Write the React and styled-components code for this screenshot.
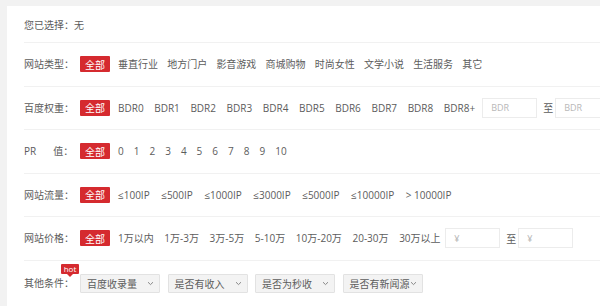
import React from "react";
import styled, { createGlobalStyle } from "styled-components";

const Global = createGlobalStyle`
  html, body { margin: 0; padding: 0; }
  body {
    background: #f2f2f2;
    overflow: hidden;
    font-family: "Open Sans", "Noto Sans CJK SC", sans-serif;
    font-size: 10px;
    color: #5c5c5c;
  }
`;

const Panel = styled.div`
  margin: 6px 0 0 7px;
  height: 300px;
  background: #fff;
  padding-left: 17px;
  box-sizing: border-box;
  overflow: hidden;
`;

const Row = styled.div`
  display: flex;
  align-items: center;
  height: ${(p) => p.$h || 42.5}px;
  border-bottom: ${(p) => (p.$last ? "none" : "1px solid #f1f1f1")};
  ${(p) => (p.$first ? "padding-top: 1px;" : "")}
`;

const Label = styled.div`
  position: relative;
  flex: 0 0 56px;
  line-height: 14px;
  white-space: nowrap;
  color: #5c5c5c;
`;

const Gap = styled.span`
  display: inline-block;
  width: ${(p) => p.$w}px;
`;

const Options = styled.div`
  display: flex;
  align-items: center;
  gap: ${(p) => p.$gap}px;
  white-space: nowrap;
`;

const AllBtn = styled.span`
  display: inline-flex;
  align-items: center;
  justify-content: center;
  width: 30px;
  height: 16px;
  background: #d52a2f;
  color: #fff;
  border-radius: 1px;
  margin-right: ${(p) => p.$after - p.$gap}px;
`;

const Opt = styled.span`
  color: #5c5c5c;
  line-height: 14px;
`;

const RangeInput = styled.div`
  width: 55px;
  height: 20px;
  box-sizing: border-box;
  border: 1px solid #ececec;
  background: #fff;
  color: #b8b8b8;
  font-size: 9px;
  padding-left: 8px;
  display: flex;
  align-items: center;
  margin-left: ${(p) => p.$ml || 0}px;
`;

const Sep = styled.span`
  margin: 0 2px 0 6px;
  color: #5c5c5c;
`;

const Range = styled.div`
  display: flex;
  align-items: center;
`;

const Selects = styled.div`
  display: flex;
  gap: 7.5px;
  align-items: center;
`;

const Select = styled.div`
  width: 80px;
  height: 19px;
  box-sizing: border-box;
  border: 1px solid #e2e2e2;
  background: #f3f3f3;
  border-radius: 1px;
  display: flex;
  align-items: center;
  justify-content: space-between;
  padding: 0 5px 0 6px;
  color: #5c5c5c;
  white-space: nowrap;
`;

const Hot = styled.span`
  position: absolute;
  left: 37px;
  top: -12px;
  width: 18px;
  height: 10px;
  background: #d52a2f;
  color: #fff;
  font-size: 8px;
  line-height: 10px;
  text-align: center;
  border-radius: 1px;
  &::after {
    content: "";
    position: absolute;
    left: 6px;
    bottom: -3px;
    border-left: 3px solid transparent;
    border-right: 3px solid transparent;
    border-top: 3px solid #d52a2f;
  }
`;

const Chevron = () => (
  <svg width="7" height="5" viewBox="0 0 7 5">
    <path d="M1 1.2 L3.5 3.6 L6 1.2" fill="none" stroke="#888" strokeWidth="1" />
  </svg>
);

const FilterRow = ({ label, items, gap, children }) => (
  <Row>
    <Label>{label}</Label>
    <Options $gap={gap}>
      <AllBtn $after={8} $gap={gap}>全部</AllBtn>
      {items.map((t) => (
        <Opt key={t}>{t}</Opt>
      ))}
      {children}
    </Options>
  </Row>
);

export default function App() {
  return (
    <>
      <Global />
      <Panel>
        <Row $h={35} $first>
          <Label>您已选择：无</Label>
        </Row>
        <FilterRow
          label="网站类型："
          gap={9.2}
          items={["垂直行业", "地方门户", "影音游戏", "商城购物", "时尚女性", "文学小说", "生活服务", "其它"]}
        />
        <FilterRow
          label="百度权重："
          gap={10.6}
          items={["BDR0", "BDR1", "BDR2", "BDR3", "BDR4", "BDR5", "BDR6", "BDR7", "BDR8", "BDR8+"]}
        >
          <Range>
            <RangeInput $ml={-3.6}>BDR</RangeInput>
            <Sep>至</Sep>
            <RangeInput>BDR</RangeInput>
          </Range>
        </FilterRow>
        <FilterRow
          label={
            <>
              PR<Gap $w={17} />值：
            </>
          }
          gap={10}
          items={["0", "1", "2", "3", "4", "5", "6", "7", "8", "9", "10"]}
        />
        <FilterRow
          label="网站流量："
          gap={11.5}
          items={["≤100IP", "≤500IP", "≤1000IP", "≤3000IP", "≤5000IP", "≤10000IP", "> 10000IP"]}
        />
        <FilterRow
          label="网站价格："
          gap={10.6}
          items={["1万以内", "1万-3万", "3万-5万", "5-10万", "10万-20万", "20-30万", "30万以上"]}
        >
          <Range>
            <RangeInput $ml={-6}>¥</RangeInput>
            <Sep>至</Sep>
            <RangeInput>¥</RangeInput>
          </Range>
        </FilterRow>
        <Row $h={45} $last>
          <Label>
            其他条件：
            <Hot>hot</Hot>
          </Label>
          <Selects>
            {["百度收录量", "是否有收入", "是否为秒收", "是否有新闻源"].map((t) => (
              <Select key={t}>
                <span>{t}</span>
                <Chevron />
              </Select>
            ))}
          </Selects>
        </Row>
      </Panel>
    </>
  );
}
